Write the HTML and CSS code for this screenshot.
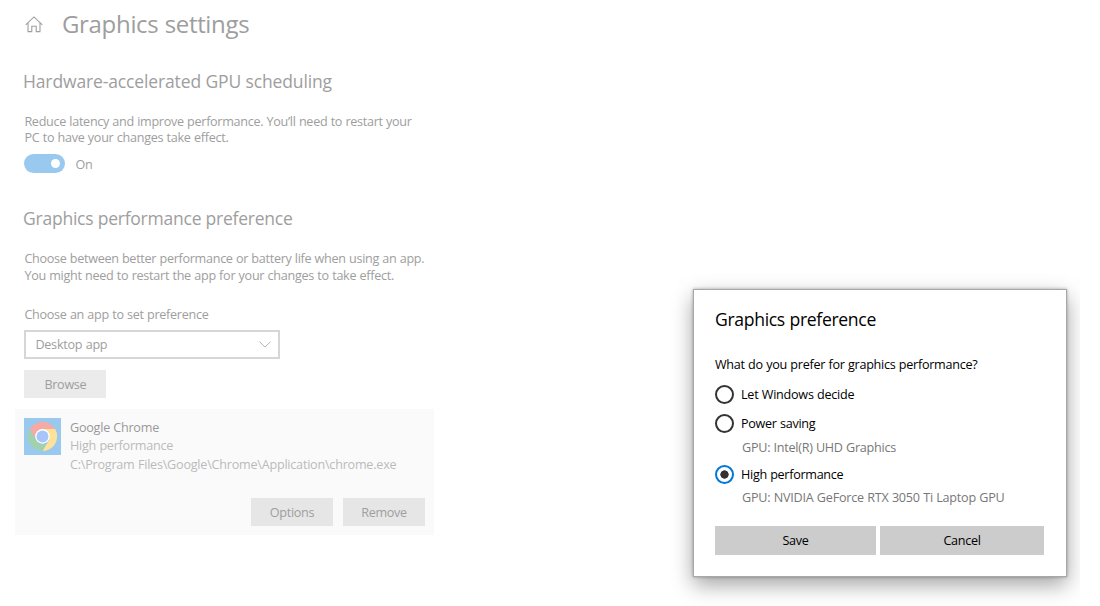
FILE: index.html
```
<!DOCTYPE html>
<html lang="en">
<head>
<meta charset="utf-8">
<title>Graphics settings</title>
<link rel="stylesheet" href="styles.css">
</head>
<body>
<div class="window">
  <main class="settings">
    <header class="header">
      <svg class="home" width="18" height="17" viewBox="0 0 18 17" fill="none" stroke="#a0a0a0" stroke-width="1.1"><path d="M.7 8.900 9 .9l8.300 8M3 7v8.600h3.800v-5.300h4.400v5.300H15V7"/></svg>
      <h1 class="title">Graphics settings</h1>
    </header>
    <h2 class="heading">Hardware-accelerated GPU scheduling</h2>
    <p class="copy copy-first"><span class="tight">Reduce latency and improve performance. You’ll need to restart your</span><br>PC to have your changes take effect.</p>
    <div class="toggle-row"><span class="toggle"><span class="knob"></span></span><span class="toggle-label">On</span></div>
    <h2 class="heading heading-pref">Graphics performance preference</h2>
    <p class="copy copy-second"><span class="tight">Choose between better performance or battery life when using an app.</span><br><span>You might need to restart the app for your changes to take effect.</span></p>
    <div class="label">Choose an app to set preference</div>
    <div class="select"><span class="select-value">Desktop app</span><svg width="12" height="7" viewBox="0 0 12 7" fill="none" stroke="#b4b4b4"><path d="M.5.7 6 6.100 11.500.7"/></svg></div>
    <div class="button browse">Browse</div>
    <section class="card">
      <div class="app">
        <svg class="chrome" width="37" height="37" viewBox="0 0 37 37">
          <path fill="#99c9ef" d="M0 0h37v37H0z"/>
          <path fill="#f5aaa5" d="M5.800 11A14.700 14.700 0 0 1 31.200 11H18.500L12 22.200z"/>
          <path fill="#fee19b" d="M31.200 11A14.700 14.700 0 0 1 18.500 33L25 22.200 18.500 11z"/>
          <path fill="#a1d2b0" d="M18.500 33A14.700 14.700 0 0 1 5.800 11L12 22.200 18.500 25.900 22.700 25z"/>
          <circle cx="18.500" cy="18.400" r="7.300" fill="#fff"/>
          <circle cx="18.500" cy="18.400" r="6" fill="#a5c5fb"/>
        </svg>
        <div class="app-text">
          <div class="app-name">Google Chrome</div>
          <div>High performance</div>
          <div class="app-path">C:\Program Files\Google\Chrome\Application\chrome.exe</div>
        </div>
      </div>
      <div class="card-actions"><div class="button">Options</div><div class="button">Remove</div></div>
    </section>
  </main>
  <section class="dialog">
    <h2 class="dialog-title">Graphics preference</h2>
    <p class="question">What do you prefer for graphics performance?</p>
    <div class="option"><span class="radio"></span><span>Let Windows decide</span></div>
    <div class="option option-power"><span class="radio"></span><span class="tight">Power saving</span></div>
    <div class="gpu">GPU: Intel(R) UHD Graphics</div>
    <div class="option option-high"><span class="radio checked"></span><span class="tight">High performance</span></div>
    <div class="gpu gpu-wide">GPU: NVIDIA GeForce RTX 3050 Ti Laptop GPU</div>
    <div class="dialog-actions"><div class="action">Save</div><div class="action">Cancel</div></div>
  </section>
</div>
</body>
</html>
```
FILE: styles.css
```
* { box-sizing: border-box; }
body { margin: 0; background: #fff; font-family: "Open Sans", "Noto Sans", sans-serif; font-size: 12.6px; letter-spacing: -.24px; word-spacing: .3px; }
h1, h2, p { margin: 0; font-weight: 400; white-space: nowrap; }
.window { width: 1080px; height: 606px; overflow: hidden; display: flex; align-items: flex-start; color: #9e9e9e; }
.settings { width: 434px; padding-left: 24.400px; }
.tight { letter-spacing: -.29px; }
.header { display: flex; align-items: center; height: 48px; }
.home { margin: 1px 19px 0 .6px; }
.title { font-size: 24px; line-height: 48px; letter-spacing: -.32px; }
.heading { font-size: 17.500px; line-height: 24px; margin: 21px 0 0 -1.400px; letter-spacing: -.13px; word-spacing: 0; }
.copy-first { line-height: 16px; margin-top: 21px; letter-spacing: -.27px; }
.toggle-row { display: flex; align-items: center; height: 19px; margin-top: 8px; }
.toggle { width: 41px; height: 19px; border-radius: 10px; background: #99c9ef; display: flex; align-items: center; justify-content: flex-end; padding-right: 5px; }
.knob { width: 9px; height: 9px; border-radius: 50%; background: #fff; }
.toggle-label { margin-left: 10px; padding-top: 2px; }
.heading-pref { margin-top: 33px; letter-spacing: -.23px; }
.copy-second { line-height: 17px; margin-top: 20px; letter-spacing: -.27px; }
.label { line-height: 18px; margin-top: 22px; letter-spacing: -.28px; }
.select { width: 256px; height: 29px; margin-top: 6px; border: 2px solid #d6d6d6; display: flex; align-items: center; justify-content: space-between; padding: 0 7px 0 9px; }
.select-value { line-height: 19px; padding-bottom: 1px; }
.button { width: 82px; height: 28px; padding-top: 1px; background: #ebebeb; display: flex; align-items: center; justify-content: center; letter-spacing: -.3px; }
.browse { margin-top: 11px; }
.card { width: 419px; height: 126px; margin: 11px 0 0 -9.400px; padding: 9px; background: #fafafa; }
.app { display: flex; gap: 9px; height: 80px; color: #bababa; }
.app-text { line-height: 18.400px; padding-top: 1px; }
.app-name { color: #999; }
.app-path { letter-spacing: -.225px; }
.card-actions { display: flex; justify-content: flex-end; gap: 10px; }
.card-actions .button { background: #e6e6e6; }
.dialog { width: 374px; height: 288px; margin: 289px 0 0 259px; padding: 16px 21px; background: #fff; border: 1px solid #a8a8a8; color: #000; box-shadow: 0 8px 20px rgba(0,0,0,.36), 0 0 3px rgba(0,0,0,.3); }
.dialog-title { font-size: 17.600px; line-height: 26px; letter-spacing: -.33px; }
.question { line-height: 18px; margin-top: 24px; letter-spacing: -.26px; }
.option { display: flex; align-items: center; gap: 7px; height: 20px; margin-top: 10px; }
.option-power { margin-top: 9px; }
.option-high { margin-top: 7px; }
.radio { width: 19px; height: 19px; border: 2px solid #333; border-radius: 50%; }
.checked { border-color: #0078d7; background: radial-gradient(circle, #333 3.800px, #fff 4.500px); }
.gpu { margin: 5px 0 0 27px; line-height: 19px; color: #777; letter-spacing: -.26px; }
.gpu-wide { letter-spacing: -.22px; margin-top: 4px; }
.dialog-actions { display: flex; gap: 4px; margin-top: 19px; }
.action { width: 161px; height: 29px; line-height: 29px; text-align: center; background: #ccc; letter-spacing: -.3px; }
.action + .action { width: 164px; }
```
